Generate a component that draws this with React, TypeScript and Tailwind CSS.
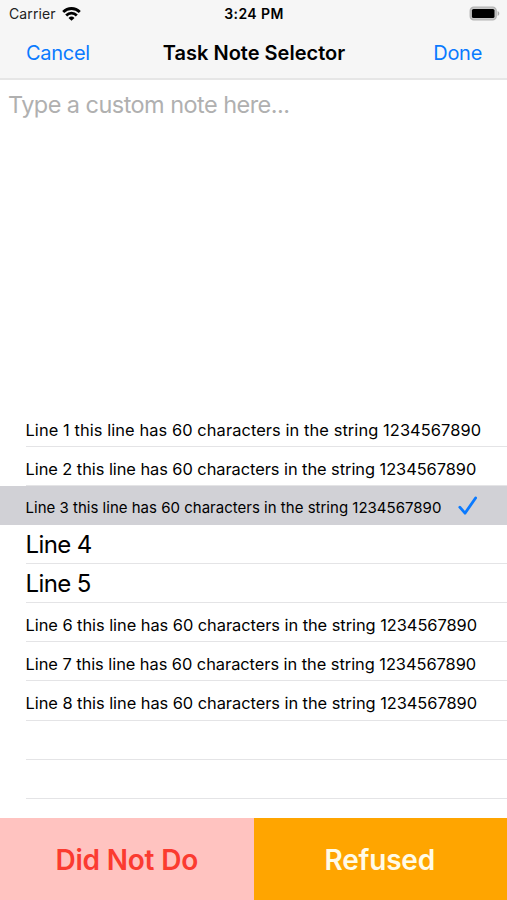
import { useState } from "react";

interface Note {
  text: string;
  className: string;
}

const NOTES: Note[] = [
  { text: "Line 1 this line has 60 characters in the string 1234567890", className: "text-[16.4px] tracking-[0.09px] pt-[7px]" },
  { text: "Line 2 this line has 60 characters in the string 1234567890", className: "text-[16.4px] tracking-[-0.05px] pt-[7px]" },
  { text: "Line 3 this line has 60 characters in the string 1234567890", className: "text-[15px] tracking-[0.01px] pt-[8px]" },
  { text: "Line 4", className: "text-[24px] tracking-[-0.6px] pt-[2px]" },
  { text: "Line 5", className: "text-[24px] tracking-[-0.6px] pt-[2px]" },
  { text: "Line 6 this line has 60 characters in the string 1234567890", className: "text-[16.4px] tracking-[-0.04px] pt-[7px]" },
  { text: "Line 7 this line has 60 characters in the string 1234567890", className: "text-[16.4px] tracking-[-0.04px] pt-[6px]" },
  { text: "Line 8 this line has 60 characters in the string 1234567890", className: "text-[16.4px] tracking-[-0.04px] pt-[6px]" },
  { text: "", className: "" },
  { text: "", className: "" },
];

function WifiIcon() {
  return (
    <svg width="19" height="14" viewBox="0 0 19 14" fill="none" stroke="#000" strokeWidth="2.8">
      <path d="M1.2 4.9a11.8 11.8 0 0 1 16.6 0" />
      <path d="M4.2 8.4a7.5 7.5 0 0 1 10.6 0" />
      <path d="M9.5 13.8 6.5 10.9a4.3 4.3 0 0 1 6 0Z" fill="#000" stroke="none" />
    </svg>
  );
}

function BatteryIcon() {
  return (
    <svg width="31" height="15" viewBox="0 0 31 15">
      <rect x="1.2" y="1.2" width="26" height="12.6" rx="3.6" fill="#c8c8c8" stroke="#b4b4b4" strokeWidth="1.3" />
      <rect x="2.9" y="2.9" width="22.6" height="9.2" rx="1.6" fill="#000" />
      <path d="M28.6 5v5c1-.4 1.7-1.4 1.7-2.5s-.7-2.1-1.7-2.5Z" fill="#aaa" />
    </svg>
  );
}

function CheckIcon() {
  return (
    <svg width="20" height="20" viewBox="0 0 20 20" fill="none" stroke="#0a7aff" strokeWidth="2.8" strokeLinecap="round" strokeLinejoin="round">
      <path d="M1.8 11.2 7 17.2 17.6 2" />
    </svg>
  );
}

export default function App() {
  const [selected, setSelected] = useState(2);

  return (
    <main className="flex h-[900px] w-[507px] flex-col overflow-hidden bg-white font-['Inter',sans-serif] text-black">
      <header className="h-[80px] shrink-0 border-b-2 border-[#e6e6e6] bg-[#f6f6f6]">
        <div className="grid h-[27px] grid-cols-3 items-center pr-[7px] pl-[9px] text-[14px]">
          <div className="flex items-center gap-[6px]">
            <span className="tracking-[0.1px] text-[#222]">Carrier</span>
            <WifiIcon />
          </div>
          <span className="pr-px text-center font-semibold tracking-[0.4px]">3:24 PM</span>
          <div className="flex justify-end">
            <BatteryIcon />
          </div>
        </div>
        <nav className="grid h-[51px] grid-cols-[1fr_auto_1fr] items-center pr-[25px] pl-[26px] text-[20px]">
          <button className="text-left tracking-[-0.3px] text-[#0a7aff]">Cancel</button>
          <h1 className="font-semibold">Task Note Selector</h1>
          <button className="text-right tracking-[-0.3px] text-[#0a7aff]">Done</button>
        </nav>
      </header>

      <textarea
        className="h-[327.4px] shrink-0 resize-none px-2 pt-[9px] text-[23.5px] leading-[31px] tracking-[-0.55px] outline-none placeholder:text-[#b0b0b0]"
        placeholder="Type a custom note here..."
      />

      <ul className="min-h-0 flex-1 overflow-hidden">
        {NOTES.map((note, i) => (
          <li
            key={i}
            onClick={() => note.text && setSelected(i)}
            className={`h-[39.15px] pl-[25.5px] ${i === selected ? "bg-[#d1d1d6]" : ""}`}
          >
            <div className={`flex h-full items-center justify-between border-b pr-[29px] ${i === selected ? "border-[#d1d1d6]" : "border-[#e4e4e6]"}`}>
              <span className={`whitespace-nowrap ${note.className}`}>{note.text}</span>
              {i === selected && <span className="pt-[3px]"><CheckIcon /></span>}
            </div>
          </li>
        ))}
      </ul>

      <footer className="grid h-[82px] shrink-0 grid-cols-2 text-[28px] font-semibold tracking-[-0.2px]">
        <button className="bg-[#ffc3c0] pt-[2px] text-[#fb3b30]">Did Not Do</button>
        <button className="bg-[#ffa500] pt-[2px] pr-px text-[#fffbe8]">Refused</button>
      </footer>
    </main>
  );
}
